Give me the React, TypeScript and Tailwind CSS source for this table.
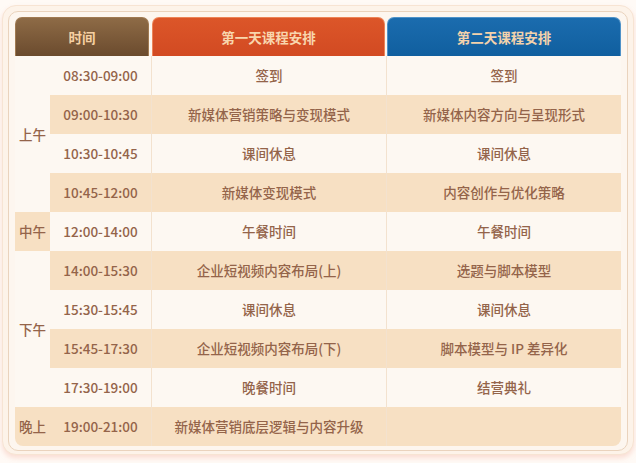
import React from "react";

const rows: { time: string; d1: string; d2: string }[] = [
  { time: "08:30-09:00", d1: "签到", d2: "签到" },
  { time: "09:00-10:30", d1: "新媒体营销策略与变现模式", d2: "新媒体内容方向与呈现形式" },
  { time: "10:30-10:45", d1: "课间休息", d2: "课间休息" },
  { time: "10:45-12:00", d1: "新媒体变现模式", d2: "内容创作与优化策略" },
  { time: "12:00-14:00", d1: "午餐时间", d2: "午餐时间" },
  { time: "14:00-15:30", d1: "企业短视频内容布局(上)", d2: "选题与脚本模型" },
  { time: "15:30-15:45", d1: "课间休息", d2: "课间休息" },
  { time: "15:45-17:30", d1: "企业短视频内容布局(下)", d2: "脚本模型与 IP 差异化" },
  { time: "17:30-19:00", d1: "晚餐时间", d2: "结营典礼" },
  { time: "19:00-21:00", d1: "新媒体营销底层逻辑与内容升级", d2: "" },
];

const rowStart = [
  "row-start-1",
  "row-start-2",
  "row-start-3",
  "row-start-4",
  "row-start-5",
  "row-start-6",
  "row-start-7",
  "row-start-8",
  "row-start-9",
  "row-start-10",
];

export default function App() {
  return (
    <div
      className="w-[636px] h-[463px] bg-[#fffaf6] pt-[5px] pl-[2px]"
      style={{ fontFamily: '"Noto Sans CJK SC", "Noto Sans", sans-serif' }}
    >
      <div className="w-[632px] rounded-[14px] border border-[#f7e4d3] bg-[#fdf3e9] px-[5px] pt-[5px] pb-[3px] shadow-[0_3px_5px_rgba(240,170,150,0.35)]">
        <div className="rounded-[10px] border border-[#ead3bd] bg-[#fdf6ef] px-[6px] pt-[5px] pb-[4px]">
          {/* header */}
          <div className="flex h-[39px] w-[606px]">
            <div className="w-[134px] rounded-t-[7px] border border-b-0 border-[#a07a52] bg-gradient-to-b from-[#8e6b46] to-[#6b4b2e] flex items-center justify-center text-[13.5px] font-bold text-[#f6d0a3]">
              时间
            </div>
            <div className="ml-[3px] w-[233px] rounded-t-[7px] border border-b-0 border-[#ec8458] bg-gradient-to-b from-[#dc5629] to-[#d24a22] flex items-center justify-center text-[13.5px] font-bold text-[#f8d6ae]">
              第一天课程安排
            </div>
            <div className="ml-[2px] w-[234px] rounded-t-[7px] border border-b-0 border-[#4f92c8] bg-gradient-to-b from-[#1b6cae] to-[#105f9f] flex items-center justify-center text-[13.5px] font-bold text-[#f3d2ac]">
              第二天课程安排
            </div>
          </div>
          {/* body */}
          <div className="grid w-[606px] grid-cols-[35px_101px_235px_235px] grid-rows-[repeat(10,39px)] overflow-hidden rounded-b-[8px] text-[13.5px] font-medium text-[#94644a]">
            <div className="col-start-1 row-start-1 row-span-4 bg-[#fdf8f2] flex items-center justify-center">上午</div>
            <div className="col-start-1 row-start-5 bg-[#f7e0c3] flex items-center justify-center">中午</div>
            <div className="col-start-1 row-start-6 row-span-4 bg-[#fdf8f2] flex items-center justify-center">下午</div>
            <div className="col-start-1 row-start-10 bg-[#f7e0c3] flex items-center justify-center">晚上</div>
            {rows.map((r, i) => {
              const bg = i % 2 === 0 ? "bg-[#fdf8f2]" : "bg-[#f7e0c3]";
              return (
                <React.Fragment key={i}>
                  <div className={`col-start-2 ${rowStart[i]} ${bg} flex items-center justify-center`}>
                    {r.time}
                  </div>
                  <div className={`col-start-3 ${rowStart[i]} ${bg} border-l border-[#f3e2cf] flex items-center justify-center`}>
                    {r.d1}
                  </div>
                  <div className={`col-start-4 ${rowStart[i]} ${bg} border-l border-[#f3e2cf] flex items-center justify-center`}>
                    {r.d2}
                  </div>
                </React.Fragment>
              );
            })}
          </div>
        </div>
      </div>
    </div>
  );
}
